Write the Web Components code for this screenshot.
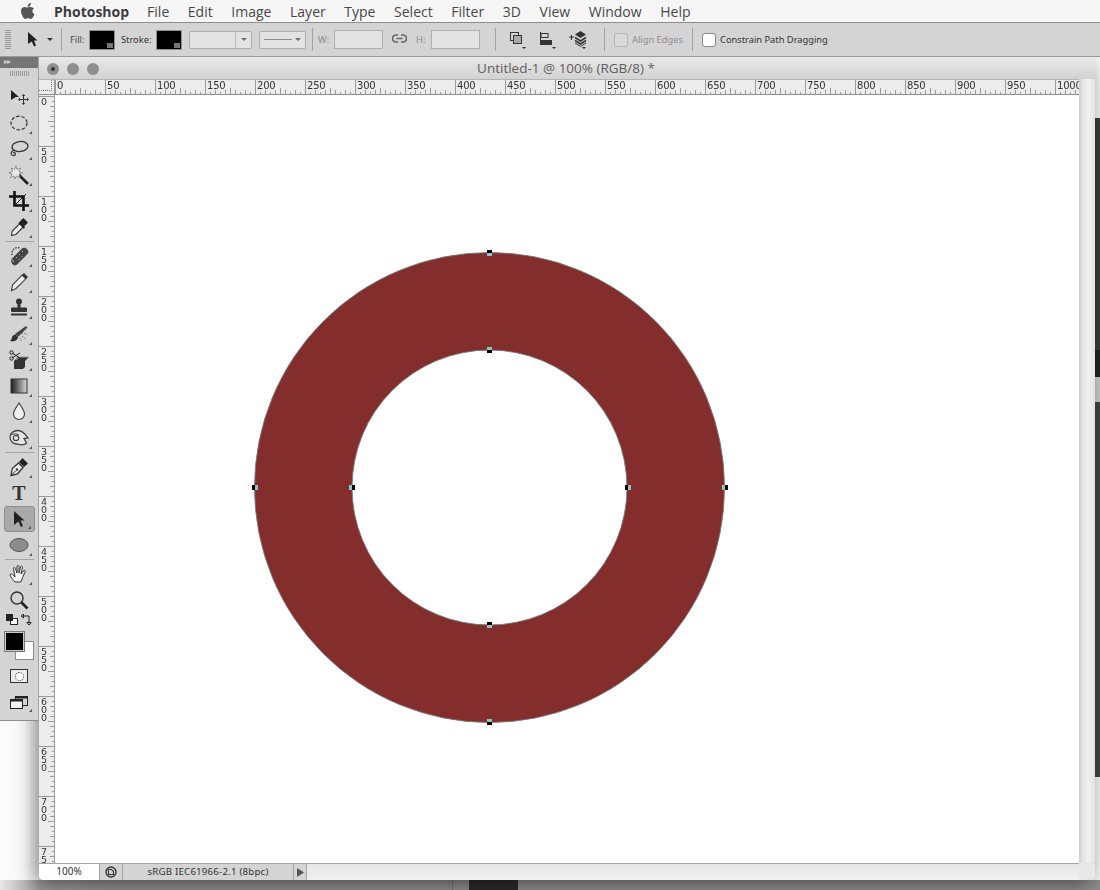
<!DOCTYPE html>
<html><head><meta charset="utf-8">
<style>
html,body{margin:0;padding:0;width:1100px;height:890px;overflow:hidden;background:#8a8a8a;font-family:"Liberation Sans",Arial,sans-serif}
</style></head><body>
<ps-app>
  <ps-menubar></ps-menubar>
  <ps-options></ps-options>
  <ps-work></ps-work>
</ps-app>
<script>
function def(name,html,init){customElements.define(name,class extends HTMLElement{constructor(){super();const r=this.attachShadow({mode:'open'});r.innerHTML=html;if(init)init(r,this)}})}

def('ps-app',`<style>:host{display:flex;flex-direction:column;width:1100px;height:890px;position:relative;overflow:hidden}</style><slot></slot>`);

def('ps-menubar',`<style>
:host{display:flex;align-items:center;height:22px;background:#f6f6f6;font:14px "Open Sans","Liberation Sans",sans-serif;color:#2e2e2e;flex:none;border-bottom:1px solid #8c8c8c}
svg{margin-left:21px;margin-right:19px;flex:none}
b{font-weight:700;margin-right:18px;font-family:"Open Sans",sans-serif;font-size:14px;color:#3c3c3c}
span{margin-right:18.600px;font-size:14px;color:#484848}
</style>
<svg width="14" height="16" viewBox="0 0 14 16"><path fill="#555" d="M9.900 0c.1 1.100-.3 2-.9 2.700-.6.700-1.500 1.200-2.400 1.100-.1-1 .4-2 .9-2.600C8.100.5 9.100.1 9.900 0zM13 5.400c-1 .6-1.600 1.500-1.600 2.700 0 1.400.8 2.400 2.100 3-.4 1-.8 1.900-1.400 2.800-.7 1-1.400 2-2.500 2-1 0-1.400-.6-2.600-.6s-1.600.6-2.600.6c-1.100 0-1.900-1.100-2.600-2.100C.8 11.900 0 9.800 0 8c0-2.700 1.700-4.100 3.500-4.100 1 0 1.900.7 2.600.7.600 0 1.600-.7 2.800-.7.900 0 2.900.3 4.100 1.500z"/></svg>
<b>Photoshop</b><span>File</span><span>Edit</span><span>Image</span><span>Layer</span><span>Type</span><span>Select</span><span>Filter</span><span>3D</span><span>View</span><span>Window</span><span>Help</span>`);

def('ps-swatch',`<style>:host{display:block;flex:none;width:24px;height:18px;background:#000;border:1px solid #8f8f8f;position:relative}
i{position:absolute;right:1px;bottom:1px;width:6px;height:5px;background:#777}</style><i></i>`);

def('ps-field',`<style>:host{display:block;flex:none;height:17px;background:#e3e3e3;border:1px solid #aeaeae;box-sizing:content-box}</style>`);

def('ps-sep',`<style>:host{display:block;flex:none;width:1px;height:23px;background:#a3a3a3}</style>`);

def('ps-options',`<style>
:host{display:flex;align-items:center;height:34px;box-sizing:border-box;background:#d4d4d4;border-bottom:1px solid #9a9a9a;flex:none;font:9.300px "Noto Sans","Liberation Sans",sans-serif;color:#4a4a4a;position:relative}
.grip{width:6px;height:20px;margin-left:5px;background:repeating-linear-gradient(#9a9a9a 0 1px,transparent 1px 2px);flex:none}
.f{display:block;flex:none}
.drop{display:flex;align-items:center;box-sizing:border-box;height:18px;background:#e3e3e3;border:1px solid #aeaeae;border-radius:2px;flex:none;position:relative}
.tri{width:0;height:0;border:3px solid transparent;border-top:3px solid #6c6c6c;border-bottom:0}
.cb{width:14px;height:14px;box-sizing:border-box;border-radius:3px;flex:none;background:#fff;border:1px solid #8a8a8a}
.lab{flex:none;width:auto}
</style>
<div class="grip"></div>
<svg class="f" style="margin-left:16px" width="12" height="17" viewBox="0 0 12 17"><path fill="#222" d="M1 1l9.500 8.500H7l2 5-2 1-2.200-5L1 13z"/></svg>
<div class="tri f" style="margin-left:8px;border-top:3px solid #333"></div>
<ps-sep style="margin-left:8px"></ps-sep>
<span class="lab" style="margin-left:8px;width:15px">Fill:</span>
<ps-swatch style="margin-left:4px"></ps-swatch>
<span class="lab" style="margin-left:6px;color:#333;width:31px">Stroke:</span>
<ps-swatch style="margin-left:4px"></ps-swatch>
<div class="drop" style="margin-left:7px;width:63px;justify-content:flex-end"><div style="width:15px;height:16px;border-left:1px solid #b8b8b8;display:flex;align-items:center;justify-content:center"><div class="tri"></div></div></div>
<div class="drop" style="margin-left:7px;width:47px;padding:0 4px;gap:3px"><div style="height:1px;width:31px;background:#8d8d8d"></div><div class="tri"></div></div>
<ps-sep style="margin-left:6px"></ps-sep>
<span class="lab" style="margin-left:5px;color:#8b8b8b;width:10px">W:</span>
<ps-field style="margin-left:6px;width:47px"></ps-field>
<svg class="f" style="margin-left:9px;margin-top:-2px" width="15" height="9" viewBox="0 0 15 9"><g fill="none" stroke="#666" stroke-width="1.700"><path d="M6 1H4a3.300 3.300 0 0 0 0 7h2M9 1h2a3.300 3.300 0 0 1 0 7H9M4.500 4.500h6"/></g></svg>
<span class="lab" style="margin-left:9px;color:#8b8b8b;width:8px">H:</span>
<ps-field style="margin-left:7px;width:47px"></ps-field>
<ps-sep style="margin-left:15px"></ps-sep>
<svg class="f" style="margin-left:13px" width="18" height="20" viewBox="0 0 18 20"><rect x="1.500" y="2.500" width="8" height="8" fill="none" stroke="#333"/><rect x="4.500" y="5.500" width="8" height="8" fill="#aaa" stroke="#333"/><path d="M13 17h4l-2 2z" fill="#333"/></svg>
<svg class="f" style="margin-left:12px" width="18" height="20" viewBox="0 0 18 20"><path d="M1.500 2v13" stroke="#333"/><rect x="2" y="3.500" width="7" height="4" fill="#d4d4d4" stroke="#333"/><rect x="2" y="10" width="11" height="5" fill="#333"/><path d="M13 17h4l-2 2z" fill="#333"/></svg>
<svg class="f" style="margin-left:11px" width="20" height="20" viewBox="0 0 20 20"><path d="M1 8h5M3.500 6v5" stroke="#333" transform="translate(0 -1)" fill="none"/><path d="M12.500 1l5.500 3.500L12.500 8 7 4.500z" fill="#333"/><path d="M7 7.500l5.500 3.500L18 7.500M7 10.500l5.500 3.500L18 10.500" stroke="#333" fill="none" stroke-width="1.500"/><path d="M7 13l5.500 3.500L18 13" stroke="#333" fill="none"/><path d="M14 17h4l-2 2z" fill="#333"/></svg>
<ps-sep style="margin-left:16px"></ps-sep>
<div class="cb" style="margin-left:9px;background:#d9d9d9;border-color:#b5b5b5"></div>
<span class="lab" style="margin-left:4px;color:#8f8f8f;width:52px">Align Edges</span>
<ps-sep style="margin-left:8px"></ps-sep>
<div class="cb" style="margin-left:9px"></div>
<span class="lab" style="margin-left:4px;color:#333">Constrain Path Dragging</span>`);

function hRuler(){let s='';for(let v=0;v<=1000;v+=50){const x=v;s+=`<div class="maj" style="left:${x}px"></div><span style="left:${x+2}px">${v}</span>`;for(let t=5;t<50;t+=5)s+=`<div class="t" style="left:${x+t}px;height:${t==25?6:(t%10==0?4:2)}px"></div>`}return s}
function vRuler(){let s='';for(let v=0;v<=750;v+=50){const y=1+v;s+=`<div class="maj" style="top:${y}px"></div><span style="top:${y+2}px">${String(v).split('').join('<br>')}</span>`;for(let t=5;t<50;t+=5)s+=`<div class="t" style="top:${y+t}px;width:${t==25?6:(t%10==0?4:2)}px"></div>`}return s}

def('ps-hruler',`<style>
:host{display:block;position:relative;height:16px;flex:1;overflow:hidden;background:#ececec;border-top:1px solid #b5b5b5;border-bottom:1px solid #8f8f8f;box-sizing:border-box;font:10px "DejaVu Sans","Liberation Sans",sans-serif;color:#333;will-change:transform}
.maj{position:absolute;top:0;bottom:0;width:1px;background:#9a9a9a}
.t{position:absolute;bottom:0;width:1px;background:#9a9a9a}
span{position:absolute;top:0;line-height:11px;font-size:10px;letter-spacing:-.2px}
</style><div id="r"></div>`,r=>{r.getElementById('r').innerHTML=hRuler()});

def('ps-vruler',`<style>
:host{display:block;position:relative;width:16px;flex:none;overflow:hidden;background:#ececec;border-right:1px solid #9f9f9f;box-sizing:border-box;font:10px "DejaVu Sans","Liberation Sans",sans-serif;color:#333;will-change:transform}
.maj{position:absolute;left:0;right:0;height:1px;background:#9a9a9a}
.t{position:absolute;right:0;height:1px;background:#9a9a9a}
span{position:absolute;left:2px;line-height:8px;font-size:9.500px}
</style><div id="r"></div>`,r=>{r.getElementById('r').innerHTML=vRuler()});

def('ps-canvas',`<style>:host{display:block;flex:1;background:#fff;position:relative;overflow:hidden}svg{position:absolute;left:0;top:0}</style>
<svg width="1026" height="768" viewBox="55 95 1026 768">
<path fill="#832e2d" stroke="#777" stroke-width=".9" fill-rule="evenodd" d="M254.500 487.500a235 235 0 1 0 470 0a235 235 0 1 0 -470 0zM352 487.500a137.500 137.500 0 1 0 275 0a137.500 137.500 0 1 0 -275 0z"/>
<g id="h"></g></svg>`,r=>{
 const B='#000',C='#8fc6c6';
 const v=(y,topC,botC)=>`<rect x="487" y="${y}" width="5" height="3" fill="${topC}"/><rect x="487" y="${y+3}" width="5" height="3" fill="${botC}"/>`;
 const h=(x,lC,rC)=>`<rect x="${x}" y="485" width="3" height="5" fill="${lC}"/><rect x="${x+3}" y="485" width="3" height="5" fill="${rC}"/>`;
 r.getElementById('h').innerHTML=v(250,B,C)+v(347,C,B)+v(622,B,C)+v(719,C,B)+h(252,B,C)+h(349,C,B)+h(625,B,C)+h(722,C,B);
});

def('ps-status',`<style>
:host{display:flex;align-items:stretch;height:16px;flex:none;background:linear-gradient(#e6e6e6,#f1f1f1);font:9.700px "Noto Sans","Liberation Sans",sans-serif;color:#333;border-top:1px solid #a6a6a6;box-sizing:content-box}
.z{width:60px;background:#fff;text-align:center;line-height:14px;font-size:10px;box-sizing:border-box}
.i{width:23px;background:#d4d4d4;border-left:1px solid #a6a6a6;display:flex;align-items:center;justify-content:center;box-sizing:border-box}
.d{width:171px;background:#d4d4d4;border-left:1px solid #a6a6a6;text-align:center;line-height:15px;box-sizing:border-box;letter-spacing:.2px}
.a{width:12px;background:#d4d4d4;border-left:1px solid #a6a6a6;border-right:1px solid #a6a6a6;display:flex;align-items:center;justify-content:center}
</style>
<div class="z">100%</div>
<div class="i"><svg width="12" height="12" viewBox="0 0 12 12"><circle cx="6" cy="6" r="5" fill="none" stroke="#333" stroke-width="1.400"/><path d="M3.500 3.500h3l2 2v3h-5z" fill="none" stroke="#333" stroke-width="1.100"/></svg></div>
<div class="d">sRGB IEC61966-2.1 (8bpc)</div>
<div class="a"><svg width="7" height="9" viewBox="0 0 7 9"><path d="M0 0l7 4.500L0 9z" fill="#555"/></svg></div>`);

def('ps-doc',`<style>
:host{display:flex;flex-direction:column;position:absolute;left:39px;top:0;width:1056px;height:823px;border-radius:5px;overflow:hidden;background:#e6e6e6}
.title{height:22px;flex:none;display:flex;align-items:center;position:relative;background:linear-gradient(#e8e8e8,#d2d2d2);font:13.500px "Open Sans","Liberation Sans",sans-serif;color:#5f5f5f;box-sizing:border-box}
.dots{display:flex;gap:8px;margin-left:8px;align-items:center;padding-top:2px}
.dots i{display:flex;width:12px;height:12px;border-radius:50%;background:#8f8f8f;align-items:center;justify-content:center}
.dots i b{width:4px;height:4px;background:#333;border-radius:50%}
.t{position:absolute;left:0;right:0;text-align:center;padding-right:2px}
.rulerrow{display:flex;height:16px;flex:none}
.corner{width:16px;flex:none;background:#ececec;border-top:1px solid #b5b5b5;border-bottom:1px solid #8f8f8f;border-right:1px solid #9f9f9f;box-sizing:border-box;position:relative}
.corner:before{content:"";position:absolute;left:0;right:2px;top:10px;border-top:1px dotted #777}
.corner:after{content:"";position:absolute;left:12px;top:0;bottom:3px;border-left:1px dotted #777}
.main{display:flex;flex:1;min-height:0}
.col{flex:1;display:flex;flex-direction:column;min-width:0}
.side{width:16px;flex:none;background:linear-gradient(90deg,#cfcfcf,#e6e6e6 25%,#f0f0f0 60%,#e2e2e2);box-sizing:border-box}
.bot{display:flex;height:17px;flex:none}
.grip{width:16px;flex:none;border-top:1px solid #a6a6a6;background-image:radial-gradient(#666 .6px,transparent .7px);background-size:2px 2px;clip-path:polygon(100% 0,100% 100%,0 100%)}
.gw{width:16px;flex:none;background:#e8e8e8;display:flex}
ps-status{flex:1}
</style>
<div class="title"><div class="dots"><i><b></b></i><i></i><i></i></div><div class="t">Untitled-1 @ 100% (RGB/8) *</div></div>
<div class="main"><div class="col">
 <div class="rulerrow"><div class="corner"></div><ps-hruler></ps-hruler></div>
 <div style="display:flex;flex:1;min-height:0"><ps-vruler></ps-vruler><ps-canvas></ps-canvas></div>
</div><div class="side"></div></div>
<div class="bot"><ps-status></ps-status><div class="gw"><div class="grip"></div></div></div>`);

const tools=[
['<path d="M2 3l8 7H6.500l-1.200 1L2 13z" fill="#222"/><path d="M14.500 8v9M10 12.500h9" stroke="#333"/><path d="M14.500 7l-1.800 2h3.600zM14.500 18l-1.800-2h3.600zM9 12.500l2-1.800v3.600zM20 12.500l-2-1.800v3.600z" fill="#333"/>',0],
['<ellipse cx="10" cy="10" rx="8" ry="6.800" fill="none" stroke="#333" stroke-dasharray="3.500 1.800" stroke-width="1.200"/>',1],
['<ellipse cx="11" cy="7.500" rx="8" ry="5" transform="rotate(-6 11 7.500)" fill="none" stroke="#333" stroke-width="1.300"/><path d="M5 11c-2 1-3.500 2.500-2.500 4.500 1 1.500 2.800 1.500 3.700.2.700-1.200-.7-2.700-2.200-2.200" fill="none" stroke="#333" stroke-width="1.300"/>',1],
['<path d="M10 10l9 9" stroke="#222" stroke-width="2.600"/><path d="M7 1l1 3.500L11.500 3l-1.500 3.500L13.500 8 10 9l1 3.500L7.500 11 6 14 5 11 1.500 12.500 3 9 0 8l3.500-1.500L2 3l3.500 1.500z" fill="#e8e8e8" stroke="#555" stroke-width=".8" stroke-dasharray="1.200 .6"/>',1],
['<path d="M5.500 0v14.500H20M0 5.500h14.500V20" fill="none" stroke="#111" stroke-width="2.600"/><path d="M5.500 14.500L17 3" stroke="#111" stroke-width="1"/>',1],
['<path d="M2.500 18.500l.8-4.500 8-8 3.500 3.500-8 8z" fill="#f0f0f0" stroke="#333" stroke-width="1.100"/><path d="M10.500 5l3.200-3.500 1-.3 4 4-.3 1-3.400 3.300 1 1-1.200 1.200-5.500-5.500z" fill="#222"/>',1],
'sep',
['<path d="M3 9a6 6 0 0 1 8-7" fill="none" stroke="#333" stroke-dasharray="1.500 1.200" stroke-width="1.200"/><path d="M2.500 16a3.300 3.300 0 0 0 5.500 2.500l10-10a3.300 3.300 0 0 0-5.500-5.500l-10 10a3.300 3.300 0 0 0 0 3z" fill="#444"/><path d="M7 11l1 1M10 8l1 1M13 5l1 1M9.500 13l1 1M12.500 10l1 1" stroke="#bbb"/><path d="M1 11l4 5" stroke="#bbb"/>',1],
['<path d="M2.500 18.500l1-5.500 9.500-10 3.800 3.800L7 16.500z" fill="#f0f0f0" stroke="#444" stroke-width="1.100"/><path d="M13 3l2-2 4 4-2 2z" fill="#333"/><path d="M2.500 18.500l1.500-.3-1.200-1.200z" fill="#222"/>',1],
['<circle cx="10" cy="3.500" r="3" fill="#333"/><rect x="8.500" y="5" width="3" height="5" fill="#333"/><rect x="2" y="9.500" width="16" height="4.500" rx="1" fill="#333"/><rect x="2" y="15.500" width="16" height="2" fill="#333"/>',1],
['<path d="M6 10L17 2l1.500 1.500L9 13z" fill="#444"/><path d="M1 17c1-.5 1.500-2 2-4 .5-1.500 2-2.500 3.300-2.500L9 13c0 3-4 5.500-8 4z" fill="#333"/><path d="M13 9l5 1M13 12l4 3M11 14l2 4" stroke="#555" stroke-dasharray="1 1.200"/>',1],
['<path d="M5 11l4-4h11l-4 4v6l-2 2H5z" fill="#333"/><path d="M7 10l4-3h8" fill="none" stroke="#999"/><path d="M3 3l8 5M3 8l8-5" stroke="#222"/><circle cx="2.500" cy="2.500" r="1.700" fill="none" stroke="#222"/><circle cx="2.500" cy="8.500" r="1.700" fill="none" stroke="#222"/>',1],
['<defs><linearGradient id="g"><stop offset="0" stop-color="#1c1c1c"/><stop offset="1" stop-color="#d8d8d8"/></linearGradient></defs><rect x="2" y="3" width="16" height="14" fill="url(#g)" stroke="#333"/>',1],
['<path d="M10 1c3 5 5.500 7.500 5.500 11a5.500 5.500 0 0 1-11 0c0-3.500 2.500-6 5.500-11z" fill="#f0f0f0" stroke="#444" stroke-width="1.200"/>',1],
['<path d="M1 9c0-4 4-6.500 8-6.500 4 0 7 3 10 7.500l-4 .5 2.500 4.500c-2 2-6 2-9 1-4 .2-7.500-2.500-7.500-7z" fill="#e6e6e6" stroke="#444" stroke-width="1.300"/><circle cx="7" cy="10" r="2.700" fill="none" stroke="#444" stroke-width="1.200"/><path d="M1.500 7c3-1.500 6-1.500 8.500 0" fill="none" stroke="#444"/>',1],
'sep',
['<path d="M2 18.500l1.300-7L9.500 6l4.500 4.500-5.500 6.300z" fill="#eee" stroke="#333" stroke-width="1.300"/><path d="M10 5l3.500-4 5.500 5.500-4 3.500z" fill="#222"/><path d="M2 18.500l5-5" stroke="#333"/><circle cx="8" cy="12.500" r="1.200" fill="#333"/>',1],
['T'],
['sel'],
['<ellipse cx="10" cy="10" rx="9" ry="6.500" fill="#8c8c8c" stroke="#555"/>',1],
'sep',
['<path d="M6 18c-2-2-5-6-5-7s1.500-1.500 2.500-.5L6 13 4.500 4.500c0-1.300 1.500-1.300 2 0L8 9V2.500c0-1.300 2-1.300 2 0V9l1.500-6c.3-1.200 2-1 2 .2L12 10l2.500-3.200c1-1 2.300 0 1.500 1.200l-2.500 5.500c-.3 2-1 3.300-2 4.500z" fill="#f6f6f6" stroke="#333"/>',1],
['<circle cx="8" cy="8" r="6" fill="none" stroke="#333" stroke-width="1.400"/><path d="M12.500 12.500l6 6" stroke="#222" stroke-width="2.700"/>',0],
];
function toolHTML(){return tools.map(t=>{
 if(t==='sep')return '<div class="sep"></div>';
 if(t[0]==='T')return `<div class="tool"><span class="T">T</span></div>`;
 if(t[0]==='sel')return `<div class="tool on"><svg width="20" height="20" viewBox="0 0 20 20"><path d="M5 2l10.500 9.500h-4l2.500 5.500-2.200 1L9.500 12.500 5 16z" fill="#222"/></svg><u></u></div>`;
 return `<div class="tool"><svg width="20" height="20" viewBox="0 0 20 20">${t[0]}</svg>${t[1]?'<u></u>':''}</div>`}).join('')}

def('ps-tools',`<style>
:host{display:flex;flex-direction:column;align-items:center;position:absolute;left:0;top:0;width:38px;height:663px;background:#d4d4d4;border-right:1px solid #a2a2a2;border-bottom:1px solid #8d8d8d;box-sizing:content-box}
.head{align-self:stretch;height:11px;background:#767676;color:#cfcfcf;font:8px "DejaVu Sans",sans-serif;line-height:10px;padding-left:4px;letter-spacing:-1px;flex:none}
.grip{width:19px;height:5px;margin:3px 0 2px;background:repeating-linear-gradient(90deg,#9a9a9a 0 1px,transparent 1px 2px);flex:none}
.list{display:flex;flex-direction:column;align-items:center;width:100%;margin-top:6px}
.tool{width:31px;height:26px;display:flex;align-items:center;justify-content:center;position:relative;flex:none;box-sizing:border-box;border-radius:3px}
.tool u{position:absolute;right:3px;bottom:2px;width:0;height:0;border-left:3px solid transparent;border-bottom:3px solid #555}
.tool.on{background:#a9a9a9;border:1px solid #8f8f8f}
.sep{width:29px;height:1px;background:#a5a5a5;margin:1px 0;flex:none}
.T{font:700 20px/1 "Liberation Serif",serif;color:#333}
.bot{display:flex;flex-direction:column;align-items:center;width:100%}
.small{display:flex;justify-content:space-between;width:26px;height:14px;align-items:center}
.colors{position:relative;width:31px;height:29px;margin-top:5px;flex:none}
.colors .bg{position:absolute;left:11px;top:9px;width:19px;height:19px;background:#fff;border:1px solid #8d8d8d;box-sizing:border-box}
.colors .fg{position:absolute;left:1px;top:0;width:19px;height:19px;background:#000;border:1px solid #c9c9c9;box-sizing:border-box;outline:1px solid #777}
.mask{width:16px;height:12px;border:1px solid #333;background:#ececec;margin-top:8px;display:flex;align-items:center;justify-content:center;flex:none}
.mask i{width:9px;height:9px;border-radius:50%;border:1px dotted #333;background:#fff;box-sizing:border-box}
.screen{margin-top:13px;position:relative;flex:none;width:24px;height:16px}
</style>
<div class="head">▸▸</div><div class="grip"></div>
<div class="list" id="l"></div>
<div class="bot">
<div class="small"><svg width="12" height="12" viewBox="0 0 12 12"><rect x="4.500" y="4.500" width="7" height="6" fill="#fff" stroke="#222"/><rect x="0" y="0" width="7" height="7" fill="#222"/></svg><svg width="11" height="12" viewBox="0 0 11 12"><path d="M2 2h6v7M0 2l2.500-2v4zM8 11L5.800 8.500h4.400z" fill="none" stroke="#222"/></svg></div>
<div class="colors"><div class="bg"></div><div class="fg"></div></div>
<div class="mask"><i></i></div>
<div class="screen"><svg width="18" height="14" viewBox="0 0 18 14" style="position:absolute;left:3px;top:0"><rect x="5.500" y=".5" width="12" height="9" fill="#d4d4d4" stroke="#222"/><rect x="5.500" y=".5" width="12" height="2" fill="#222"/><rect x=".5" y="3.500" width="12" height="9" fill="#f2f2f2" stroke="#222"/><rect x=".5" y="3.500" width="12" height="2" fill="#222"/></svg><span style="position:absolute;right:-1px;bottom:0;width:0;height:0;border-left:3px solid transparent;border-bottom:3px solid #555"></span></div>
</div>`,r=>{r.getElementById('l').innerHTML=toolHTML()});

def('ps-work',`<style>
:host{display:block;position:relative;flex:1;overflow:hidden;background:#fbfbfb}
.bottom{position:absolute;left:0;right:0;top:823px;height:10px;background:linear-gradient(90deg,#e8e8e8 0,#9c9c9c 40px,#8f8f8f 120px)}
.dark{position:absolute;left:469px;top:823px;width:49px;height:10px;background:#2b2b2b}
.line{position:absolute;left:452px;top:823px;width:1px;height:10px;background:#777}
.edge{position:absolute;left:1095px;width:5px}
.sh{position:absolute;left:39px;top:0;width:1056px;height:823px;border-radius:5px;box-shadow:-4px 4px 20px rgba(0,0,0,.5)}
</style>
<div class="bottom"></div><div class="dark"></div><div class="line"></div>
<div class="edge" style="top:61px;height:232px;background:#3c3c3c"></div>
<div class="edge" style="top:293px;height:27px;background:#222"></div>
<div class="edge" style="top:320px;height:25px;background:#d0d0d0"></div>
<div class="edge" style="top:345px;height:375px;background:#444"></div>
<div class="sh"></div>
<ps-doc></ps-doc><ps-tools></ps-tools>`);
</script>
</body></html>
